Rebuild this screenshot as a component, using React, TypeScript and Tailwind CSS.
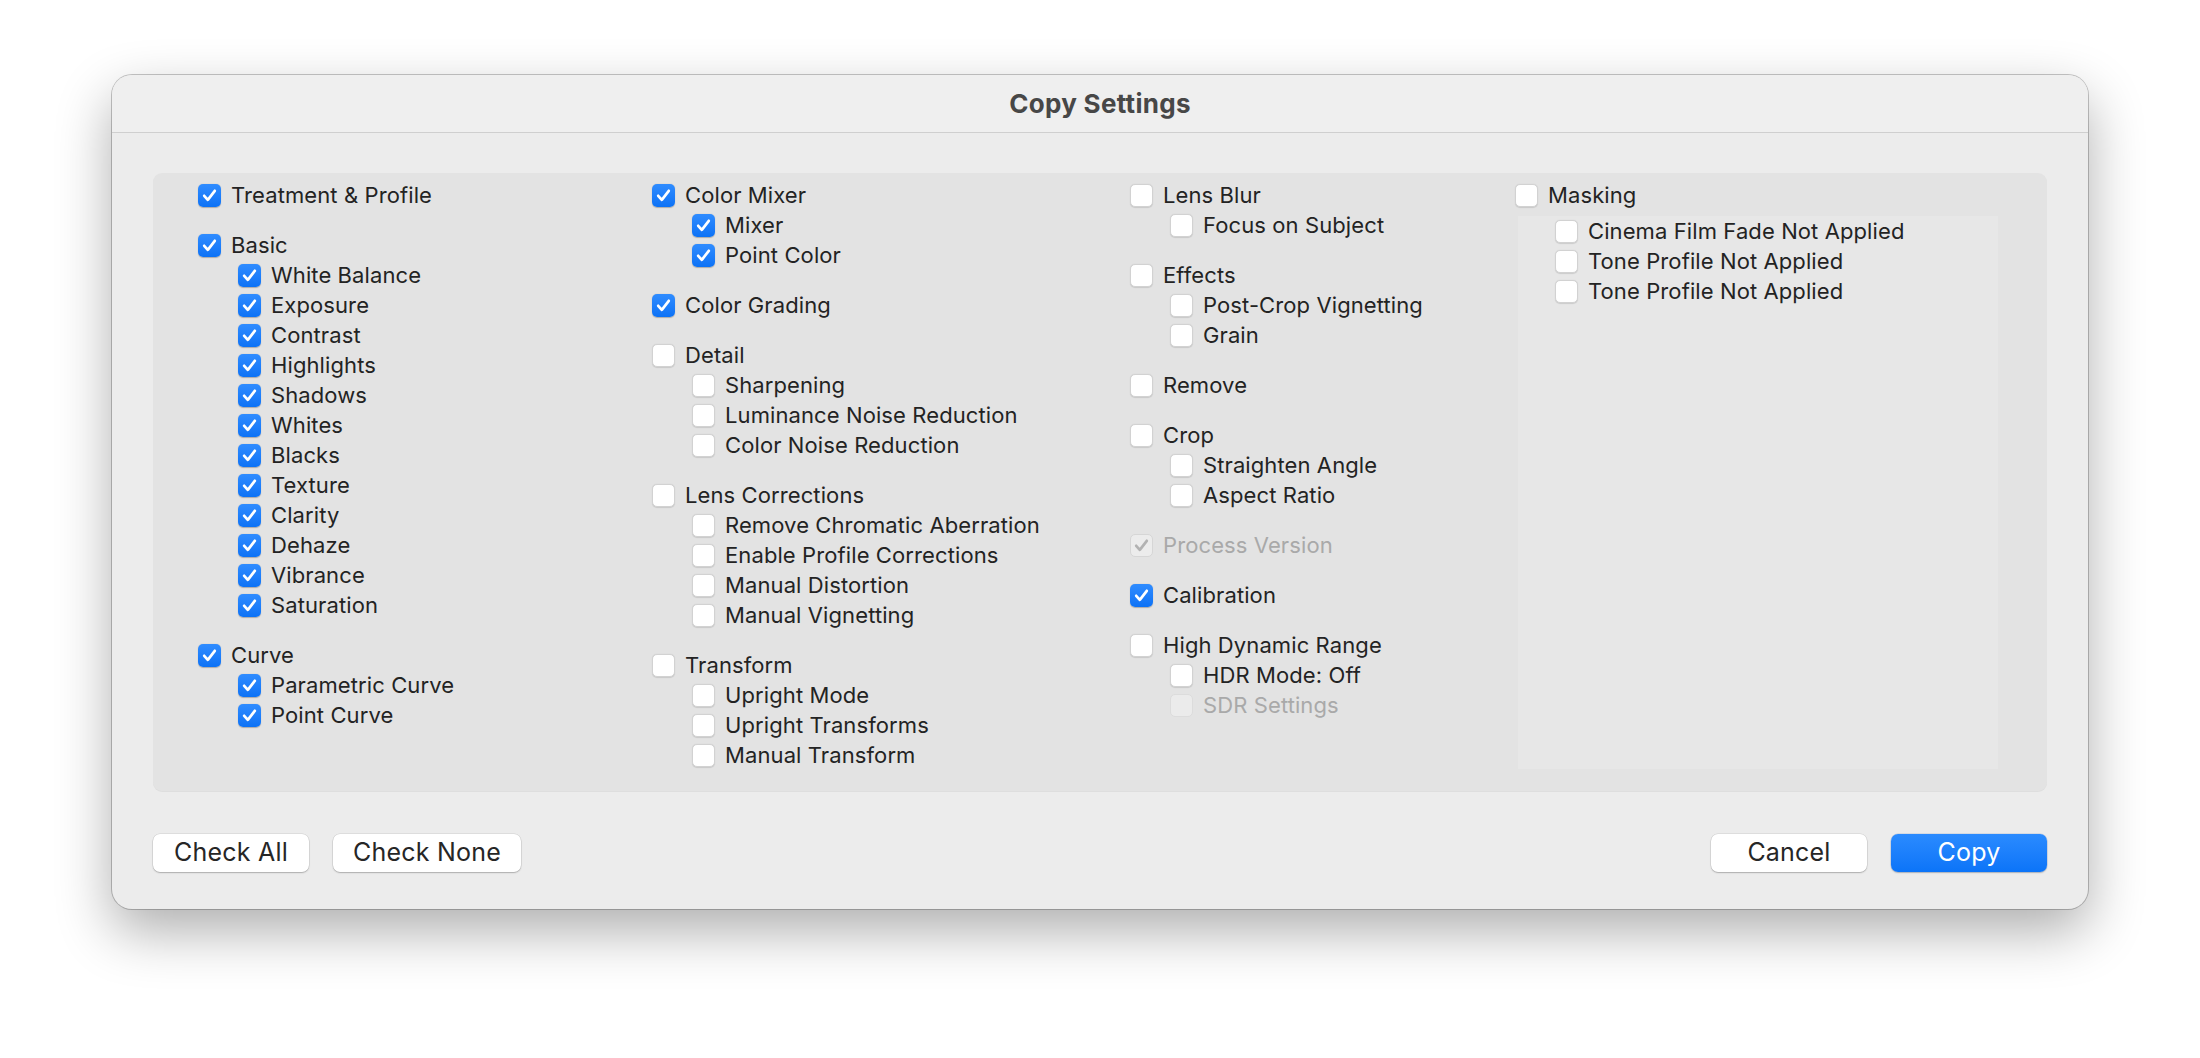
import React, { useState } from 'react';

interface Setting {
  label: string;
  checked?: boolean;
  disabled?: boolean;
  children?: Setting[];
}

const columns: Setting[][] = [
  [
    { label: 'Treatment & Profile', checked: true },
    {
      label: 'Basic',
      checked: true,
      children: [
        'White Balance',
        'Exposure',
        'Contrast',
        'Highlights',
        'Shadows',
        'Whites',
        'Blacks',
        'Texture',
        'Clarity',
        'Dehaze',
        'Vibrance',
        'Saturation',
      ].map((label) => ({ label, checked: true })),
    },
    {
      label: 'Curve',
      checked: true,
      children: [
        { label: 'Parametric Curve', checked: true },
        { label: 'Point Curve', checked: true },
      ],
    },
  ],
  [
    {
      label: 'Color Mixer',
      checked: true,
      children: [
        { label: 'Mixer', checked: true },
        { label: 'Point Color', checked: true },
      ],
    },
    { label: 'Color Grading', checked: true },
    {
      label: 'Detail',
      children: [{ label: 'Sharpening' }, { label: 'Luminance Noise Reduction' }, { label: 'Color Noise Reduction' }],
    },
    {
      label: 'Lens Corrections',
      children: [
        { label: 'Remove Chromatic Aberration' },
        { label: 'Enable Profile Corrections' },
        { label: 'Manual Distortion' },
        { label: 'Manual Vignetting' },
      ],
    },
    {
      label: 'Transform',
      children: [{ label: 'Upright Mode' }, { label: 'Upright Transforms' }, { label: 'Manual Transform' }],
    },
  ],
  [
    { label: 'Lens Blur', children: [{ label: 'Focus on Subject' }] },
    { label: 'Effects', children: [{ label: 'Post-Crop Vignetting' }, { label: 'Grain' }] },
    { label: 'Remove' },
    { label: 'Crop', children: [{ label: 'Straighten Angle' }, { label: 'Aspect Ratio' }] },
    { label: 'Process Version', checked: true, disabled: true },
    { label: 'Calibration', checked: true },
    {
      label: 'High Dynamic Range',
      children: [{ label: 'HDR Mode: Off' }, { label: 'SDR Settings', disabled: true }],
    },
  ],
];

const maskingItems = ['Cinema Film Fade Not Applied', 'Tone Profile Not Applied', 'Tone Profile Not Applied'];

function CheckBox({ checked, disabled }: { checked: boolean; disabled?: boolean }) {
  if (checked && !disabled) {
    return (
      <span className="flex h-[23px] w-[23px] shrink-0 items-center justify-center rounded-[5px] bg-gradient-to-b from-[#2f8cff] to-[#0b72f6] shadow-[0_0.5px_1px_rgba(0,0,0,0.25)]">
        <svg width="23" height="23" viewBox="0 0 23 23" fill="none">
          <path d="M6.2 11.8 L9.8 15.8 L16.8 6.8" stroke="white" strokeWidth="2.7" strokeLinecap="round" strokeLinejoin="round" />
        </svg>
      </span>
    );
  }
  if (checked && disabled) {
    return (
      <span className="flex h-[23px] w-[23px] shrink-0 items-center justify-center rounded-[5px] border border-[#d6d6d6] bg-[#ececec]">
        <svg width="21" height="21" viewBox="0 0 21 21" fill="none">
          <path d="M5.2 10.8 L8.8 14.8 L15.8 5.8" stroke="#b2b2b2" strokeWidth="2.7" strokeLinecap="round" strokeLinejoin="round" />
        </svg>
      </span>
    );
  }
  return (
    <span
      className={
        disabled
          ? 'h-[23px] w-[23px] shrink-0 rounded-[5px] border border-[#dcdcdc] bg-[#ebebeb]'
          : 'h-[23px] w-[23px] shrink-0 rounded-[5px] border border-[#d2d2d2] bg-white shadow-[0_0.5px_1px_rgba(0,0,0,0.12)]'
      }
    />
  );
}

function Row({
  label,
  checked,
  disabled,
  indent,
  onToggle,
}: {
  label: string;
  checked: boolean;
  disabled?: boolean;
  indent?: boolean;
  onToggle: () => void;
}) {
  return (
    <div
      className={`flex h-[30px] items-center gap-[10px] ${indent ? 'pl-[40px]' : ''} ${disabled ? 'cursor-default' : 'cursor-pointer'}`}
      onClick={() => !disabled && onToggle()}
    >
      <CheckBox checked={checked} disabled={disabled} />
      <span className={`whitespace-nowrap ${disabled ? 'text-[#a9a9a9]' : 'text-[#232323]'}`}>{label}</span>
    </div>
  );
}

function initialState() {
  const state: Record<string, boolean> = {};
  columns.forEach((col, ci) =>
    col.forEach((group, gi) => {
      state[`${ci}-${gi}`] = !!group.checked;
      group.children?.forEach((child, k) => {
        state[`${ci}-${gi}-${k}`] = !!child.checked;
      });
    })
  );
  state['mask'] = false;
  maskingItems.forEach((_, k) => (state[`mask-${k}`] = false));
  return state;
}

export default function App() {
  const [checks, setChecks] = useState<Record<string, boolean>>(initialState);

  const toggle = (key: string) => setChecks({ ...checks, [key]: !checks[key] });

  const setAll = (value: boolean) => {
    const next: Record<string, boolean> = {};
    Object.keys(checks).forEach((k) => (next[k] = value));
    setChecks(next);
  };

  const colWidths = ['w-[454px]', 'w-[478px]', 'w-[385px]'];

  return (
    <div className="min-h-screen w-full bg-white pl-[112px] pt-[75px] font-['Inter',sans-serif] text-[22px] tracking-[0.1px]">
      <div className="flex h-[834px] w-[1976px] flex-col overflow-hidden rounded-[20px] bg-[#ececec] shadow-[0_0_0_1px_rgba(0,0,0,0.22),0_22px_55px_rgba(0,0,0,0.32)]">
        {/* title bar */}
        <div className="flex h-[58px] shrink-0 items-center justify-center border-b border-[#cfcfcf] bg-[#efefef]">
          <h1 className="text-[26px] font-bold tracking-[0.3px] text-[#474747]">Copy Settings</h1>
        </div>

        <div className="flex flex-1 flex-col px-[41px] pt-[40px]">
          <div className="flex h-[618px] rounded-[9px] bg-[#e3e3e3] pl-[45px] pt-[7px] shadow-[0_1px_0_rgba(0,0,0,0.06)]">
            {columns.map((col, ci) => (
              <div key={ci} className={`flex shrink-0 flex-col gap-[20px] ${colWidths[ci]}`}>
                {col.map((group, gi) => (
                  <div key={gi} className="flex flex-col">
                    <Row
                      label={group.label}
                      checked={checks[`${ci}-${gi}`]}
                      disabled={group.disabled}
                      onToggle={() => toggle(`${ci}-${gi}`)}
                    />
                    {group.children?.map((child, k) => (
                      <Row
                        key={k}
                        indent
                        label={child.label}
                        checked={checks[`${ci}-${gi}-${k}`]}
                        disabled={child.disabled}
                        onToggle={() => toggle(`${ci}-${gi}-${k}`)}
                      />
                    ))}
                  </div>
                ))}
              </div>
            ))}

            <div className="flex shrink-0 flex-col">
              <Row label="Masking" checked={checks['mask']} onToggle={() => toggle('mask')} />
              <div className="ml-[3px] mt-[6px] flex h-[553px] w-[480px] flex-col bg-[#e7e7e7] pl-[37px]">
                {maskingItems.map((label, k) => (
                  <Row key={k} label={label} checked={checks[`mask-${k}`]} onToggle={() => toggle(`mask-${k}`)} />
                ))}
              </div>
            </div>
          </div>

          <div className="mt-[43px] flex h-[38px] items-center text-[25px] tracking-[0.2px]">
            <button
              className="h-[38px] w-[156px] rounded-[7px] bg-white text-[#262626] shadow-[0_0_0_0.5px_rgba(0,0,0,0.12),0_1px_1.5px_rgba(0,0,0,0.22)]"
              onClick={() => setAll(true)}
            >
              Check All
            </button>
            <button
              className="ml-[24px] h-[38px] w-[188px] rounded-[7px] bg-white text-[#262626] shadow-[0_0_0_0.5px_rgba(0,0,0,0.12),0_1px_1.5px_rgba(0,0,0,0.22)]"
              onClick={() => setAll(false)}
            >
              Check None
            </button>
            <div className="flex-1" />
            <button className="h-[38px] w-[156px] rounded-[7px] bg-white text-[#262626] shadow-[0_0_0_0.5px_rgba(0,0,0,0.12),0_1px_1.5px_rgba(0,0,0,0.22)]">
              Cancel
            </button>
            <button className="ml-[24px] h-[38px] w-[156px] rounded-[7px] bg-gradient-to-b from-[#2a8bff] to-[#0b74f8] text-white shadow-[0_0_0_0.5px_rgba(0,60,160,0.2),0_1px_1.5px_rgba(0,0,0,0.2)]">
              Copy
            </button>
          </div>
        </div>
      </div>
    </div>
  );
}
